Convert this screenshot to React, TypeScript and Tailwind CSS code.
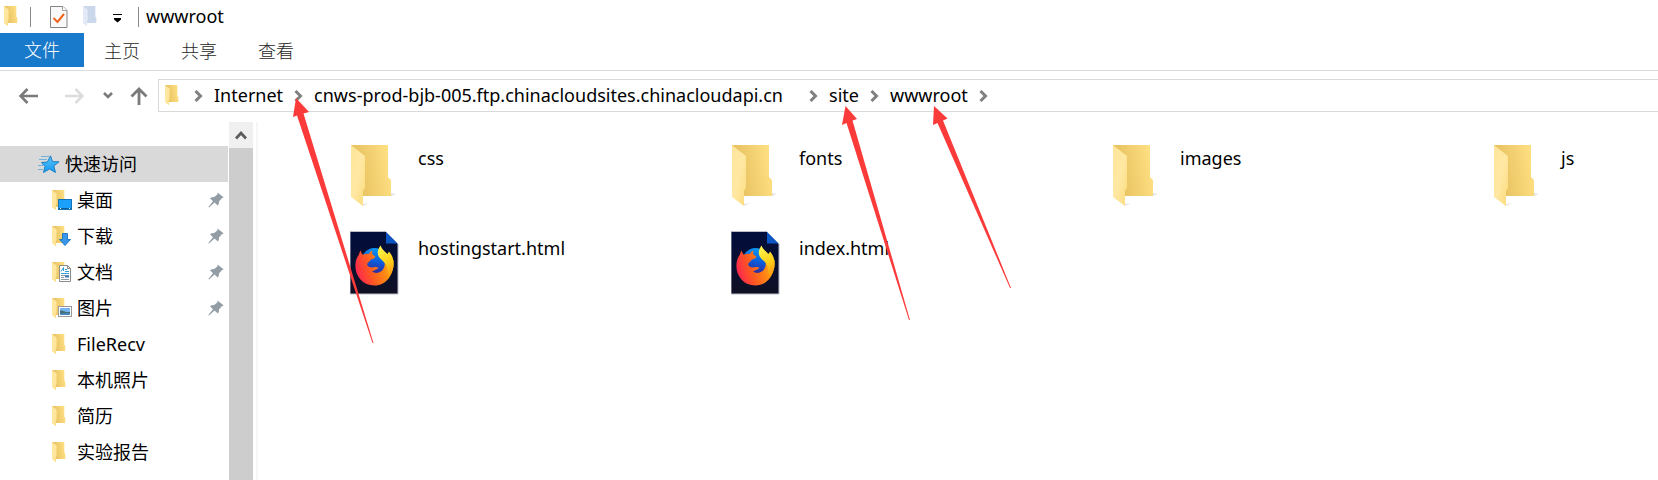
import type { ReactNode } from "react";

const tabs = ["主页", "共享", "查看"];

const crumbs: { name: string; width?: string }[] = [
  { name: "Internet" },
  { name: "cnws-prod-bjb-005.ftp.chinacloudsites.chinacloudapi.cn", width: "min-w-[484px]" },
  { name: "site" },
  { name: "wwwroot" },
];

type Overlay = "desktop" | "download" | "document" | "picture";

const places: { name: string; overlay?: Overlay }[] = [
  { name: "桌面", overlay: "desktop" },
  { name: "下载", overlay: "download" },
  { name: "文档", overlay: "document" },
  { name: "图片", overlay: "picture" },
  { name: "FileRecv" },
  { name: "本机照片" },
  { name: "简历" },
  { name: "实验报告" },
];

const files: { name: string; kind: "folder" | "html" }[] = [
  { name: "css", kind: "folder" },
  { name: "fonts", kind: "folder" },
  { name: "images", kind: "folder" },
  { name: "js", kind: "folder" },
  { name: "hostingstart.html", kind: "html" },
  { name: "index.html", kind: "html" },
];

function Gradients() {
  return (
    <svg className="absolute h-0 w-0" aria-hidden="true">
      <defs>
        <linearGradient id="folder-back" x1="0" y1="0.6" x2="1" y2="0.4">
          <stop offset="0.2" stopColor="#e9c362" />
          <stop offset="1" stopColor="#fee083" />
        </linearGradient>
        <linearGradient id="folder-flap" x1="0" y1="0" x2="1" y2="1">
          <stop offset="0" stopColor="#ffe59a" />
          <stop offset="0.5" stopColor="#ffe8a3" />
          <stop offset="1" stopColor="#fbdb7c" />
        </linearGradient>
        <linearGradient id="page" x1="0" y1="0" x2="0" y2="1">
          <stop offset="0" stopColor="#000d3c" />
          <stop offset="1" stopColor="#101024" />
        </linearGradient>
        <linearGradient id="globe" x1="0.6" y1="0" x2="0.4" y2="1">
          <stop offset="0" stopColor="#0a9bf5" />
          <stop offset="0.5" stopColor="#0a5ddc" />
          <stop offset="1" stopColor="#3b2390" />
        </linearGradient>
        <linearGradient id="fox" x1="0" y1="0.6" x2="1" y2="0.3">
          <stop offset="0" stopColor="#fb2650" />
          <stop offset="0.35" stopColor="#ff5722" />
          <stop offset="0.7" stopColor="#ff8a14" />
          <stop offset="1" stopColor="#ffc60f" />
        </linearGradient>
        <linearGradient id="flame" x1="0.3" y1="0" x2="0.6" y2="1">
          <stop offset="0" stopColor="#fff44f" />
          <stop offset="0.55" stopColor="#ffd21a" />
          <stop offset="1" stopColor="#ff9712" />
        </linearGradient>
        <linearGradient id="star" x1="0" y1="0" x2="0" y2="1">
          <stop offset="0" stopColor="#5cc4fb" />
          <stop offset="1" stopColor="#139af0" />
        </linearGradient>
      </defs>
    </svg>
  );
}

function FolderShape() {
  return (
    <>
      <path d="M0 0H37V32L40 35V51H12Z" fill="url(#folder-back)" />
      <path d="M0 0L14 11V43L12 46V61L0 52Z" fill="url(#folder-flap)" />
    </>
  );
}

function SmallFolder({ className = "" }: { className?: string }) {
  return (
    <svg viewBox="0 0 42 63" className={`h-[21px] w-[14px] shrink-0 ${className}`} aria-hidden="true">
      <FolderShape />
    </svg>
  );
}

function LargeFolder() {
  return (
    <svg viewBox="0 0 56 70" className="h-[70px] w-14 shrink-0" aria-hidden="true">
      <path d="M13 66L19 63L13 64ZM41 56L46 54L41 53Z" fill="#e4e4e4" />
      <g transform="translate(1 5)">
        <FolderShape />
      </g>
    </svg>
  );
}

function HtmlFile() {
  return (
    <svg viewBox="0 0 56 70" className="h-[70px] w-14 shrink-0" aria-hidden="true">
      <g transform="translate(0 1)">
        <path d="M0 .5H35.5L48 13V63H0Z" fill="url(#page)" stroke="#b9bccb" />
        <path d="M36 1V12.500H47.500Z" fill="#0b55c4" />
        <circle cx="24.500" cy="30" r="13" fill="url(#globe)" />
        <path
          d="M10.700 19.500C11 21.500 11.800 23 13 23.800C15 22.600 17.500 22.500 19 23C19.500 21.300 20.800 20 22.500 19.800C21.800 21.500 22 23 23 24L25.200 25.200C25.200 27.500 22.500 28 21 28.500C19.800 29.300 20 30.600 18 31.500C16.500 33 17 35.200 19.500 36C22 37.300 25 35 28.500 36.700C27 39 24.500 38.500 22 40.500C25 43 30.500 42 33 38.500C35.500 35 35 31 33.500 28L43.300 29C45 42 37 54.500 24.500 54.500C12 54.500 4 44 5.600 32C6 28.500 7 26 9 23.500C9.300 22 9.800 20.500 10.700 19.500Z"
          fill="url(#fox)"
        />
        <path
          d="M30.700 14.500C31.500 18 34.500 20 37.500 23L39 20.500C44 26 45 34 42 40.500C41 43 39.500 44.500 38 46C37.500 42 38 38 36 34C34 29.500 27.200 27.500 27.800 21C28 18.500 29.300 16 30.700 14.500Z"
          fill="url(#flame)"
        />
      </g>
    </svg>
  );
}

const overlays: Record<Overlay, ReactNode> = {
  desktop: (
    <>
      <rect x="6.500" y="9.500" width="13" height="10" fill="#1ba1fb" stroke="#1673b4" />
      <path d="M7 18.500H19" stroke="#0e5d9c" />
      <path d="M8 18.500H9M17 18.500H18" stroke="#fff" />
    </>
  ),
  download: <path d="M10.500 7.500H15.500V13.500H18.500L13 19.500L7.500 13.500H10.500Z" fill="#3a96e8" stroke="#2378c4" />,
  document: (
    <>
      <path d="M7.500 3.500H15.500L18.500 6.500V19.500H7.500Z" fill="#fff" stroke="#8b8b8b" />
      <path d="M15.500 3.500V6.500H18.500" fill="none" stroke="#8b8b8b" />
      <path d="M9 9.500L11.500 5.500V9M13 7.500H15M13 9.500H17M9 11.500H17" fill="none" stroke="#2f9fd8" />
      <path d="M9 13.500H17M9 15.500H12M9 17.500H17" stroke="#8e9aa3" />
      <path d="M13 14.500H17" stroke="#3c79b8" strokeWidth="2" />
    </>
  ),
  picture: (
    <>
      <rect x="6.500" y="8.500" width="13" height="10" fill="#fff" stroke="#9b9b9b" />
      <rect x="8" y="10" width="10" height="7" fill="#76b5ef" />
      <path d="M8 12.500C11 12 13 14.500 18 14V17H8Z" fill="#416f72" />
      <path d="M8 15.500L18 15V17H8Z" fill="#4a88c4" />
    </>
  ),
};

function PlaceIcon({ overlay }: { overlay?: Overlay }) {
  return (
    <svg viewBox="0 0 21 21" className="h-[21px] w-[21px] shrink-0" aria-hidden="true">
      <g transform="scale(.333)">
        <FolderShape />
      </g>
      {overlay && overlays[overlay]}
    </svg>
  );
}

function Pin() {
  return (
    <svg viewBox="0 0 16 16" className="h-4 w-4" aria-hidden="true">
      <path
        d="M9.500 0.500L15.800 5.500L14 6L11 9.500C11 11 11 12.200 9.800 13.500L6.500 10.500L1 15.500L0.300 15L5 9.200L2 6.200C3.500 5 5 5 6.200 5L9.500 2.200Z"
        fill="#929da5"
      />
    </svg>
  );
}

function Chevron({ className = "" }: { className?: string }) {
  return (
    <svg viewBox="0 0 9 12" className={`h-3 w-[9px] shrink-0 ${className}`} aria-hidden="true">
      <path d="M1.500 1L6.500 6L1.500 11" fill="none" stroke="#808080" strokeWidth="3" />
    </svg>
  );
}

function TitleBar() {
  return (
    <header className="flex h-[33px] items-center pl-1">
      <SmallFolder />
      <span className="ml-3 h-5 w-px bg-[#8a8a8a]" />
      <button type="button" aria-label="属性" className="ml-[19px]">
        <svg viewBox="0 0 18 22" className="h-[22px] w-[18px]" aria-hidden="true">
          <path d="M.5 .5H13L17 4.500V21.500H.5Z" fill="#f9f9f9" stroke="#858585" />
          <path d="M12.500 .5V4.500H17" fill="#fff" stroke="#a0a0a0" />
          <path d="M3.500 12L7.500 16L14 8" fill="none" stroke="#f0641e" strokeWidth="2" />
        </svg>
      </button>
      <button type="button" aria-label="新建文件夹" className="ml-[15px]">
        <svg viewBox="0 0 42 63" className="h-[21px] w-[14px]" aria-hidden="true">
          <path d="M0 0H37V32L40 35V51H12Z" fill="#cbd7ea" />
          <path d="M0 0L14 11V43L12 46V61L0 52Z" fill="#e2eaf7" />
        </svg>
      </button>
      <button type="button" aria-label="自定义快速访问工具栏" className="ml-4">
        <svg viewBox="0 0 9 9" className="mt-1 h-[9px] w-[9px]" aria-hidden="true">
          <path d="M0 0H9V1H0ZM1 4H8V5.500L4.500 8.500L1 5.500Z" fill="#000" />
        </svg>
      </button>
      <span className="ml-4 h-5 w-px bg-[#8a8a8a]" />
      <h1 className="ml-[7px] pb-px leading-6">wwwroot</h1>
    </header>
  );
}

function Ribbon() {
  return (
    <div className="flex h-[38px] items-start border-b border-[#dadbdc] font-light">
      <button type="button" className="h-[34px] w-[84px] bg-[#1979ca] text-white">
        文件
      </button>
      <div className="ml-5 flex gap-[41px] text-[#262626]">
        {tabs.map((tab) => (
          <button key={tab} type="button" className="h-9">
            {tab}
          </button>
        ))}
      </div>
    </div>
  );
}

function AddressRow() {
  return (
    <div className="flex items-center pt-2">
      <div className="flex w-[158px] shrink-0 items-center pl-[19px]">
        <button type="button" aria-label="返回">
          <svg viewBox="0 0 20 16" className="h-4 w-5" fill="none" stroke="#7a7a7a" strokeWidth="2.600" aria-hidden="true">
            <path d="M1.500 8H19M8.500 1L1.500 8L8.500 15" />
          </svg>
        </button>
        <button type="button" aria-label="前进" disabled className="ml-[25px]">
          <svg viewBox="0 0 20 16" className="h-4 w-5" fill="none" stroke="#dcdcdc" strokeWidth="2.600" aria-hidden="true">
            <path d="M1 8H18.500M11.500 1L18.500 8L11.500 15" />
          </svg>
        </button>
        <button type="button" aria-label="最近浏览的位置" className="ml-[19px]">
          <svg viewBox="0 0 10 7" className="h-[7px] w-[10px]" fill="none" stroke="#7a7a7a" strokeWidth="2.600" aria-hidden="true">
            <path d="M1 1L5 5L9 1" />
          </svg>
        </button>
        <button type="button" aria-label="上移" className="ml-[17px]">
          <svg viewBox="0 0 18 18" className="h-[18px] w-[18px]" fill="none" stroke="#7a7a7a" strokeWidth="2.800" aria-hidden="true">
            <path d="M9 18V2M1.500 9.500L9 2L16.500 9.500" />
          </svg>
        </button>
      </div>
      <nav
        aria-label="地址"
        className="flex h-[33px] min-w-0 flex-1 items-center overflow-hidden border border-r-0 border-[#d9d9d9] pl-[6px]"
      >
        <SmallFolder className="mr-[15px]" />
        <Chevron />
        {crumbs.map((crumb) => (
          <div key={crumb.name} className="flex shrink-0 items-center">
            <a href="#" className={`mr-[11px] ml-[11px] pb-[2px] leading-6 ${crumb.width ?? ""}`}>
              {crumb.name}
            </a>
            <Chevron />
          </div>
        ))}
      </nav>
    </div>
  );
}

function Sidebar() {
  return (
    <aside className="flex w-[258px] shrink-0 border-r-2 border-[#f6f6f6]">
      <nav aria-label="导航窗格" className="w-[228px] pt-6">
        <a href="#" className="flex h-9 items-center bg-[#d9d9d9] pl-[38px]">
          <svg viewBox="0 0 22 19" className="mr-[5px] h-[19px] w-[22px]" aria-hidden="true">
            <path
              d="M12.500 .8L14.500 6.700L21 6.800L15.800 11L17.500 17.500L11.500 14L5.500 17.500L7 11.500L3.500 7.500L9.500 7Z"
              fill="url(#star)"
              stroke="#1a7fc6"
            />
            <path d="M3 1.500H11M1 4.500H9M0 10.500H5M0 14.500H5" stroke="#6fb2dd" />
          </svg>
          快速访问
        </a>
        {places.map((place) => (
          <a key={place.name} href="#" className="flex h-9 items-center pr-1 pl-[52px]">
            <PlaceIcon overlay={place.overlay} />
            <span className="ml-1 flex-1">{place.name}</span>
            {place.overlay && <Pin />}
          </a>
        ))}
      </nav>
      <div className="ml-px flex w-6 flex-col bg-[#cdcdcd]">
        <button type="button" aria-label="向上滚动" className="flex h-[26px] items-center justify-center bg-[#f0f0f0]">
          <svg viewBox="0 0 12 10" className="h-[10px] w-3" aria-hidden="true">
            <path d="M1 8.500L6 3L11 8.500" fill="none" stroke="#5c5c5c" strokeWidth="2.800" />
          </svg>
        </button>
      </div>
    </aside>
  );
}

function FileGrid() {
  return (
    <main className="min-w-0 flex-1 overflow-hidden pt-[18px] pl-[92px]">
      <ul className="grid grid-cols-[repeat(4,381px)]">
        {files.map((file) => (
          <li key={file.name} className="h-[90px]">
            <a href="#" className="flex items-start gap-3">
              {file.kind === "folder" ? <LargeFolder /> : <HtmlFile />}
              <span className="pt-[6px] leading-6">{file.name}</span>
            </a>
          </li>
        ))}
      </ul>
    </main>
  );
}

function Annotations() {
  return (
    <svg
      viewBox="0 0 1658 480"
      className="pointer-events-none absolute top-0 left-0 h-[480px] w-[1658px]"
      fill="#fb3b3a"
      aria-hidden="true"
    >
      <path d="M296 98L309 112L303.500 113.500L373.500 343H372.500L297 115.500L293 117Z" />
      <path d="M845.500 106L857 119L852.500 120.500L910 320H909L846.500 123L842 125Z" />
      <path d="M934 106L947.500 118.500L943 120.500L1011 288H1010L937.500 123L933 125Z" />
    </svg>
  );
}

export default function App() {
  return (
    <div className="relative flex min-h-screen flex-col overflow-hidden bg-white font-['Noto_Sans','Noto_Sans_CJK_SC',sans-serif] text-lg leading-6 text-black">
      <Gradients />
      <TitleBar />
      <Ribbon />
      <AddressRow />
      <div className="mt-[10px] flex flex-1">
        <Sidebar />
        <FileGrid />
      </div>
      <Annotations />
    </div>
  );
}
